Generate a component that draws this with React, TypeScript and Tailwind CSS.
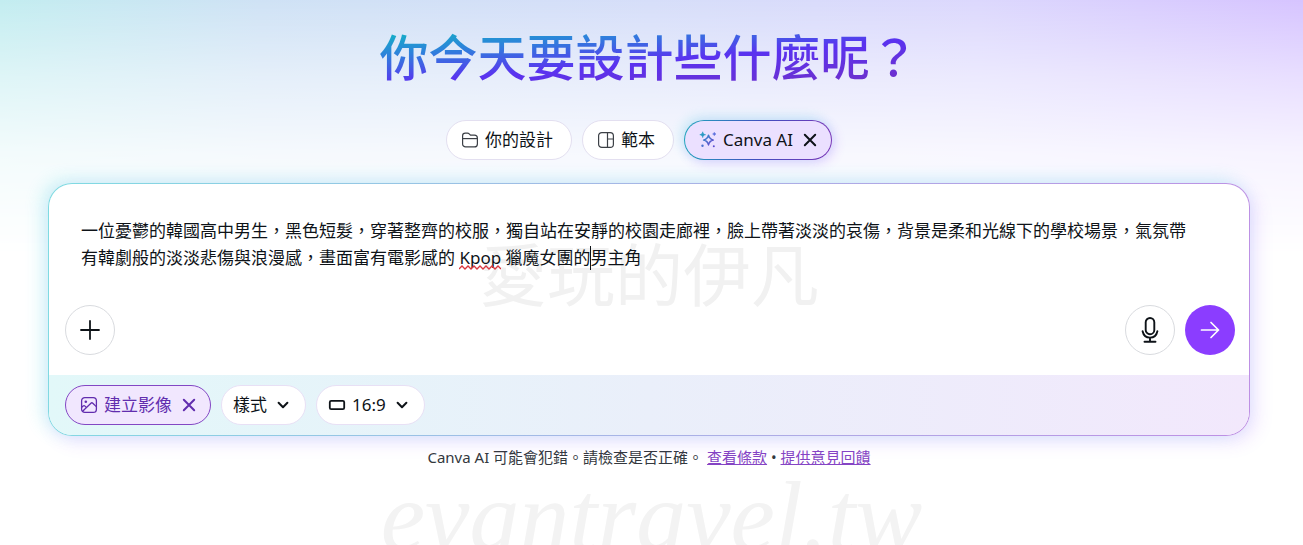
import React, { useState } from "react";

const PROMPT =
  "一位憂鬱的韓國高中男生，黑色短髮，穿著整齊的校服，獨自站在安靜的校園走廊裡，臉上帶著淡淡的哀傷，背景是柔和光線下的學校場景，氣氛帶有韓劇般的淡淡悲傷與浪漫感，畫面富有電影感的 Kpop 獵魔女團的男主角";

// Icons
const FolderIcon = () => (
  <svg width="18" height="18" viewBox="0 0 18 18" fill="none" stroke="#3c4046" strokeWidth="1.2" aria-hidden="true">
    <path d="M1.600 8V4.800c0-1.700 1-2.700 2.700-2.700h2.200c.7 0 1.200.2 1.700.7l1.300 1.400h3.900c1.700 0 3 1.300 3 3v5.700c0 1.700-1.300 3-3 3H4.600c-1.700 0-3-1.300-3-3V8z" />
    <path d="M1.600 7.600h14.800" />
  </svg>
);

const TemplateIcon = () => (
  <svg width="18" height="18" viewBox="0 0 18 18" fill="none" stroke="#3c4046" strokeWidth="1.2" aria-hidden="true">
    <rect x="1.6" y="1.600" width="14.800" height="14.800" rx="3.200" />
    <path d="M10.500 1.600v14.800M10.500 8h5.900" />
  </svg>
);

const SparkleIcon = () => (
  <svg width="18" height="18" viewBox="0 0 18 18" fill="none" aria-hidden="true">
    <defs>
      <linearGradient id="sparkle" x1="0" y1="0" x2="1" y2="1">
        <stop offset="0" stopColor="#2f8fc8" />
        <stop offset="1" stopColor="#6a45d0" />
      </linearGradient>
    </defs>
    <path
      d="M9.500 4.200c.7 3 1.800 4.100 4.800 4.900-3 .7-4.100 1.800-4.800 4.800-.7-3-1.900-4.100-4.900-4.800 3-.8 4.200-1.900 4.900-4.900z"
      stroke="url(#sparkle)"
      strokeWidth="1.500"
      strokeLinejoin="round"
    />
    <path
      d="M3.700.8c.4 1.900 1 2.500 2.900 2.900-1.900.4-2.500 1-2.900 2.900C3.300 4.700 2.700 4.100.8 3.700c1.900-.4 2.500-1 2.900-2.900z"
      fill="#2a9ac4"
      stroke="#2a9ac4"
      strokeWidth=".6"
    />
    <path
      d="M15.300 1.300c.2 1.100.6 1.500 1.700 1.700-1.100.2-1.500.6-1.700 1.700-.2-1.100-.6-1.500-1.700-1.700 1.100-.2 1.500-.6 1.700-1.700z"
      fill="#4b63d8"
      stroke="#4b63d8"
      strokeWidth=".5"
    />
    <circle cx="3.500" cy="14.800" r="1.200" fill="#4b73d0" />
    <circle cx="14.800" cy="15.200" r="1" fill="#5a4dd0" />
  </svg>
);

const ImageIcon = () => (
  <svg width="18" height="18" viewBox="0 0 18 18" fill="none" stroke="currentColor" strokeWidth="1.300" aria-hidden="true">
    <rect x="1.600" y="1.600" width="14.800" height="14.800" rx="3.200" />
    <circle cx="5.800" cy="5.800" r="1.300" fill="currentColor" stroke="none" />
    <path d="M2.600 15.200l8.300-8c.6-.6 1.300-.6 1.900 0l3.500 3.400M1.800 11.300l1.300-1.200c.6-.6 1.300-.6 1.900 0l1.900 1.900" />
  </svg>
);

const CloseIcon = () => (
  <svg width="14" height="14" viewBox="0 0 14 14" fill="none" stroke="currentColor" strokeWidth="2" strokeLinecap="round" aria-hidden="true">
    <path d="M1.800 1.800l10.400 10.400M12.200 1.800L1.800 12.200" />
  </svg>
);

const ChevronIcon = () => (
  <svg width="12" height="8" viewBox="0 0 12 8" fill="none" stroke="currentColor" strokeWidth="2" strokeLinecap="round" strokeLinejoin="round" aria-hidden="true">
    <path d="M1.600 1.800L6 6.200l4.400-4.400" />
  </svg>
);

const RatioIcon = () => (
  <svg width="18" height="12" viewBox="0 0 18 12" fill="none" stroke="currentColor" strokeWidth="1.800" aria-hidden="true">
    <rect x="1.800" y="1.800" width="14.400" height="8.400" rx="1.400" />
  </svg>
);

const PlusIcon = () => (
  <svg width="20" height="20" viewBox="0 0 20 20" fill="none" stroke="currentColor" strokeWidth="1.800" strokeLinecap="round" aria-hidden="true">
    <path d="M10 1v18M1 10h18" />
  </svg>
);

const MicIcon = () => (
  <svg width="18" height="26" viewBox="0 0 18 26" fill="none" stroke="currentColor" strokeWidth="1.900" strokeLinecap="round" aria-hidden="true">
    <rect x="4.700" y="1" width="8.600" height="16.200" rx="4.300" />
    <path d="M1.600 14.200c.8 3.900 3.500 6.400 7.400 6.400s6.600-2.500 7.400-6.400M9 20.600v4M3.500 24.700h11" />
  </svg>
);

const ArrowIcon = () => (
  <svg width="20" height="18" viewBox="0 0 20 18" fill="none" stroke="currentColor" strokeWidth="1.700" strokeLinecap="round" strokeLinejoin="round" aria-hidden="true">
    <path d="M1.500 9h17M11 1.500L18.500 9 11 16.500" />
  </svg>
);

const App = () => {
  const [prompt, setPrompt] = useState(PROMPT);

  return (
    <div
      lang="zh-Hant"
      className="relative min-h-screen overflow-hidden bg-white pr-[53px] pl-12 font-['Noto_Sans','Noto_Sans_CJK_TC',sans-serif] text-[#0e1318]"
    >
      {/* Background wash */}
      <div className="absolute inset-x-0 top-0 h-64 bg-[linear-gradient(90deg,#c3edf0,#cfe2f5_20%,#d6def9_50%,#dcd8fd_75%,#d6c4ff)] mask-[linear-gradient(#000,rgba(0,0,0,0.55)_30%,rgba(0,0,0,0.2)_60%,transparent)]"></div>

      <main className="relative flex flex-col">
        <h1 className="mt-5 self-center bg-[linear-gradient(175deg,#10b4c4_10%,#2f80dc_30%,#5a32f0_54%,#7030c8_90%)] bg-clip-text text-[49px] leading-[74px] font-medium text-transparent">
          你今天要設計些什麼呢？
        </h1>

        {/* Tabs */}
        <div className="mt-[26px] mr-5 flex justify-center gap-[10px] text-[17px]">
          <button className="flex h-10 items-center gap-1.5 rounded-full border border-[#e3dff0] bg-white pr-[18px] pl-[14px]">
            <FolderIcon />
            你的設計
          </button>
          <button className="flex h-10 items-center gap-1.5 rounded-full border border-[#e3dff0] bg-white pr-[18px] pl-[14px]">
            <TemplateIcon />
            範本
          </button>
          <button className="flex h-10 items-center gap-1.5 rounded-full border border-transparent px-[14px] shadow-[-3px_-3px_12px_#22ccdd33,3px_3px_12px_#8b3dff33] [background:linear-gradient(#ebe0ff,#ebe0ff)_padding-box,linear-gradient(100deg,#20a8bd,#4050c0_50%,#7a35b8)_border-box]">
            <SparkleIcon />
            <span className="mr-1">Canva AI</span>
            <CloseIcon />
          </button>
        </div>

        {/* Prompt card */}
        <form
          className="relative mt-[23px] overflow-hidden rounded-3xl border border-transparent [background:linear-gradient(white,white)_padding-box,linear-gradient(100deg,#7fdbe2,#a8b4e6_50%,#be8fe4)_border-box] shadow-[-6px_-3px_18px_#22ccdd33,6px_6px_18px_#8b3dff26]"
          onSubmit={(e) => e.preventDefault()}
        >
          <div
            className="pointer-events-none absolute inset-x-0 top-12 text-center text-[68px] leading-[86px] text-[#f1f1f1]"
            aria-hidden="true"
          >
            愛玩的伊凡
          </div>

          <div className="relative pt-[33px] pr-12 pl-8">
            <textarea
              aria-label="描述"
              rows={3}
              spellCheck={false}
              value={prompt}
              onChange={(e) => setPrompt(e.target.value)}
              className="block w-full resize-none overflow-hidden bg-transparent text-[17px] leading-[27px] outline-none"
            />
            {/* Spelling mark and caret */}
            <svg className="absolute top-[81px] left-[410px]" width="42" height="6" fill="none" stroke="#d9363e" strokeWidth="1.300" aria-hidden="true">
              <path d="M0 4l3-3 3 3 3-3 3 3 3-3 3 3 3-3 3 3 3-3 3 3 3-3 3 3 3-3 3 3" />
            </svg>
            <span className="absolute top-[62px] left-[541px] h-6 w-px bg-[#0e1318]"></span>
          </div>

          <div className="relative mt-[7px] mb-5 flex items-center gap-[10px] pr-[14px] pl-4">
            <button type="button" aria-label="新增" className="mr-auto flex size-[50px] items-center justify-center rounded-full border border-[#d9dbdf] bg-white">
              <PlusIcon />
            </button>
            <button type="button" aria-label="語音輸入" className="flex size-[50px] items-center justify-center rounded-full border border-[#d9dbdf] bg-white">
              <MicIcon />
            </button>
            <button type="submit" aria-label="送出" className="flex size-[50px] items-center justify-center rounded-full bg-[#8b3dff] text-white">
              <ArrowIcon />
            </button>
          </div>

          <div className="flex gap-[10px] bg-linear-to-r from-[#e2f8f9] via-[#eaeffa] to-[#f2e8fc] px-4 py-[10px] text-[17px]">
            <button type="button" className="flex h-10 items-center gap-1.5 rounded-full border border-[#8347c4] bg-[#f1e7fe] px-[14px] text-[#612dae]">
              <ImageIcon />
              <span className="mr-1">建立影像</span>
              <CloseIcon />
            </button>
            <button type="button" className="flex h-10 items-center gap-[10px] rounded-full border border-[#e8e0f5] bg-white pr-4 pl-[11px]">
              樣式
              <ChevronIcon />
            </button>
            <button type="button" className="flex h-10 items-center rounded-full border border-[#e8e0f5] bg-white pr-4 pl-[11px]">
              <RatioIcon />
              <span className="mr-[10px] ml-1.5">16:9</span>
              <ChevronIcon />
            </button>
          </div>
        </form>

        <p className="mt-[9px] text-center text-[15px] leading-6 text-[#33383e]">
          Canva AI 可能會犯錯。請檢查是否正確。{" "}
          <a href="#terms" className="text-[#8544c4] underline">
            查看條款
          </a>{" "}
          •{" "}
          <a href="#feedback" className="text-[#8544c4] underline">
            提供意見回饋
          </a>
        </p>
      </main>

      <div
        className="pointer-events-none absolute inset-x-0 top-[472px] text-center font-['Liberation_Serif',serif] text-[100px] leading-[90px] text-[#f3f3f3] italic"
        aria-hidden="true"
      >
        evantravel.tw
      </div>
    </div>
  );
};

export default App;
